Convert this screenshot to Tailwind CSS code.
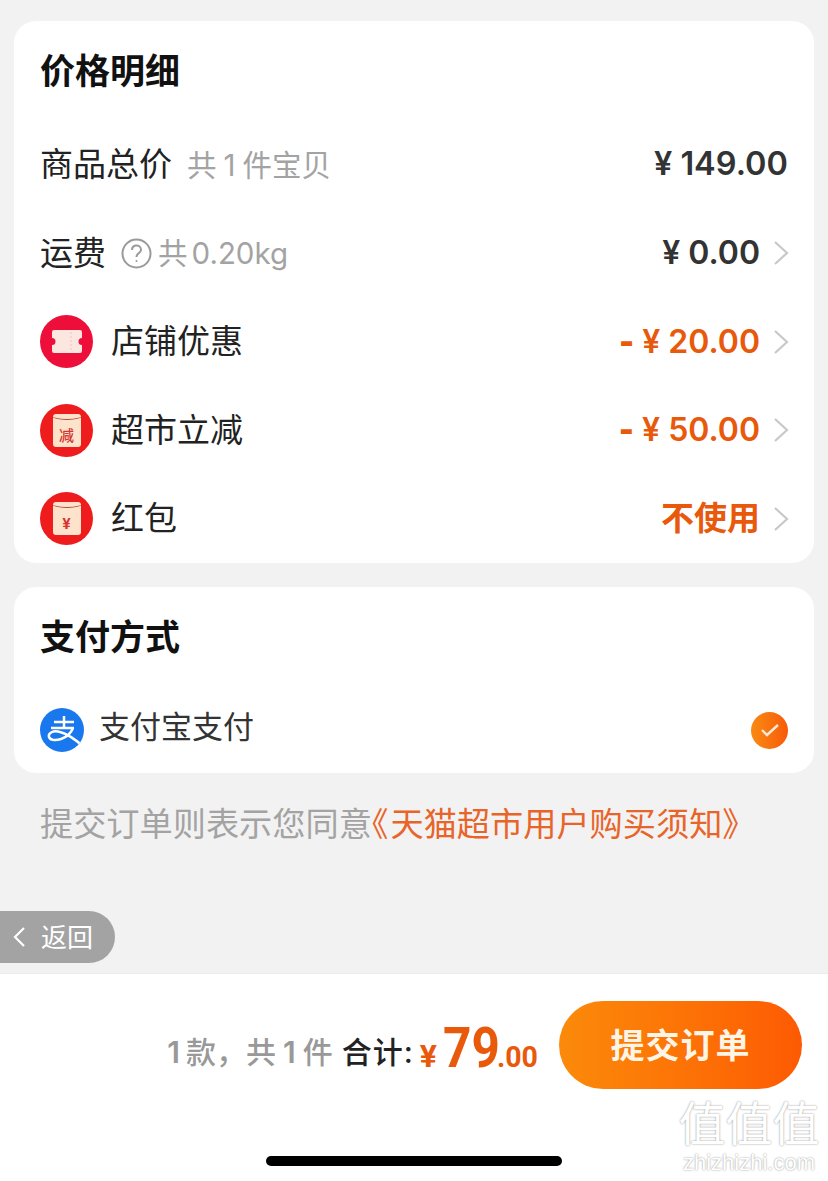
<!DOCTYPE html>
<html lang="zh-CN">
<head>
  <meta charset="UTF-8">
  <meta name="viewport" content="width=device-width, initial-scale=1.0">
  <title>确认订单</title>
  <script src="https://cdn.jsdelivr.net/npm/@tailwindcss/browser@4"></script>
</head>
<body class="font-['Inter','Noto_Sans_CJK_SC',sans-serif] bg-[#f2f2f2]">
  <div class="relative flex flex-col w-[828px] h-[1181px] overflow-hidden">

    <main class="flex-1 px-[14px] pt-[21px]">
      <!-- price detail -->
      <section class="bg-white rounded-[22px] pl-[26px] pr-[25px]">
        <h2 class="h-[99.5px] flex items-center text-[35px] font-bold text-[#111]">价格明细</h2>

        <div class="h-[88.5px] flex items-center justify-between">
          <div class="flex items-center">
            <span class="text-[33px] text-[#222]">商品总价</span>
            <span class="ml-[15px] text-[29.5px] text-[#a3a3a3]">共<span class="mx-[7px]">1</span>件宝贝</span>
          </div>
          <span class="mr-[1px] text-[32.5px] font-semibold text-[#333]">¥ 149.00</span>
        </div>

        <div class="h-[88.5px] flex items-center justify-between">
          <div class="flex items-center">
            <span class="text-[33px] text-[#222]">运费</span>
            <svg class="ml-[15px]" width="31" height="31" viewBox="0 0 31 31" fill="none" stroke="#9a9a9a" stroke-width="2"><circle cx="15.5" cy="15.5" r="14"/><path d="M11 12c0-3 2-4.500 4.500-4.500s4.500 1.700 4.500 4.200c0 3.300-4.500 3.300-4.500 7.300"/><circle cx="15.500" cy="23" r="1" fill="#9a9a9a" stroke="none"/></svg>
            <span class="ml-[6px] text-[29.5px] text-[#a3a3a3]">共<span class="ml-[4px]">0.20kg</span></span>
          </div>
          <div class="flex items-center">
            <span class="text-[32px] font-semibold text-[#333]">¥ 0.00</span>
            <svg class="ml-[13px]" width="16" height="26" viewBox="0 0 16 26" fill="none" stroke="#c8c8c8" stroke-width="2.200"><path d="M2 2l12 11L2 24"/></svg>
          </div>
        </div>

        <div class="h-[88.5px] flex items-center justify-between">
          <div class="flex items-center">
            <div class="w-[53px] h-[53px] rounded-full bg-[#ee0e3a] flex items-center justify-center">
              <svg width="30" height="23" viewBox="0 0 30 23"><path d="M2 0h26a2 2 0 0 1 2 2v6a3.500 3.500 0 0 0 0 7v6a2 2 0 0 1-2 2H2a2 2 0 0 1-2-2v-6a3.500 3.500 0 0 0 0-7V2a2 2 0 0 1 2-2z" fill="#fbe6e0"/><path d="M19 2v19" stroke="#f3c4bd" stroke-width="1" stroke-dasharray="2 2"/></svg>
            </div>
            <span class="ml-[18px] text-[33px] text-[#222]">店铺优惠</span>
          </div>
          <div class="flex items-center">
            <span class="text-[32px] font-semibold text-[#e8590c]"><b>-</b> ¥ 20.00</span>
            <svg class="ml-[13px]" width="16" height="26" viewBox="0 0 16 26" fill="none" stroke="#c8c8c8" stroke-width="2.200"><path d="M2 2l12 11L2 24"/></svg>
          </div>
        </div>

        <div class="h-[88.5px] flex items-center justify-between">
          <div class="flex items-center">
            <div class="w-[53px] h-[53px] rounded-full bg-[#ee1c1c] flex items-center justify-center">
              <div class="relative w-[28px] h-[33px] rounded-[3px] bg-[#fde3cc] flex items-end justify-center overflow-hidden">
                <div class="absolute -top-[4px] -left-[2px] w-[32px] h-[10px] rounded-b-[50%] border-b border-[#a8473a]"></div>
                <span class="text-[15px] leading-[23px] font-medium text-[#d4352f]">减</span>
              </div>
            </div>
            <span class="ml-[18px] text-[33px] text-[#222]">超市立减</span>
          </div>
          <div class="flex items-center">
            <span class="text-[32px] font-semibold text-[#e8590c]"><b>-</b> ¥ 50.00</span>
            <svg class="ml-[13px]" width="16" height="26" viewBox="0 0 16 26" fill="none" stroke="#c8c8c8" stroke-width="2.200"><path d="M2 2l12 11L2 24"/></svg>
          </div>
        </div>

        <div class="h-[88.5px] flex items-center justify-between">
          <div class="flex items-center">
            <div class="w-[53px] h-[53px] rounded-full bg-[#ee1c1c] flex items-center justify-center">
              <div class="relative w-[28px] h-[33px] rounded-[3px] bg-[#fde3cc] flex items-end justify-center overflow-hidden">
                <div class="absolute -top-[4px] -left-[2px] w-[32px] h-[10px] rounded-b-[50%] border-b border-[#a8473a]"></div>
                <span class="text-[15px] leading-[23px] font-bold text-[#d4352f]">¥</span>
              </div>
            </div>
            <span class="ml-[18px] text-[33px] text-[#222]">红包</span>
          </div>
          <div class="flex items-center">
            <span class="text-[33px] font-semibold text-[#e8590c]">不使用</span>
            <svg class="ml-[13px]" width="16" height="26" viewBox="0 0 16 26" fill="none" stroke="#c8c8c8" stroke-width="2.200"><path d="M2 2l12 11L2 24"/></svg>
          </div>
        </div>
      </section>

      <!-- payment -->
      <section class="mt-[24px] bg-white rounded-[22px] pl-[26px] pr-[26px]">
        <h2 class="h-[100px] flex items-center text-[35px] font-bold text-[#111]">支付方式</h2>
        <div class="h-[86px] flex items-center justify-between">
          <div class="flex items-center">
            <svg width="44" height="44" viewBox="0 0 44 44" fill="none" stroke="#fff" stroke-width="2.500">
              <defs><clipPath id="alipay-clip"><circle cx="22" cy="22" r="22"/></clipPath></defs>
              <circle cx="22" cy="22" r="22" fill="#1a78ee" stroke="none"/>
              <g clip-path="url(#alipay-clip)">
                <path d="M14 14h20M24 8v12M11 20h23"/>
                <path d="M33 20c-2 5-6 9-12 11-6 2-11 1-12-2-1-4 4-7 11-5 8 2 16 8 24 15"/>
              </g>
            </svg>
            <span class="ml-[15px] pb-[5px] text-[31px] text-[#333]">支付宝支付</span>
          </div>
          <div class="w-[37px] h-[37px] rounded-full bg-gradient-to-r from-[#f98a12] to-[#f7590b] flex items-center justify-center">
            <svg width="20" height="16" viewBox="0 0 20 16" fill="none" stroke="#fde9d8" stroke-width="2.400"><path d="M2 8l5 5L18 3"/></svg>
          </div>
        </div>
      </section>

      <p class="mt-[27px] pl-[26px] text-[33.2px] leading-[48px] text-[#a3a3a3] whitespace-nowrap">提交订单则表示您同意<span class="text-[#e8652a] [font-feature-settings:'halt']"><span class="mr-[2px]">《</span>天猫超市用户购买须知》</span></p>
    </main>

    <!-- floating back pill -->
    <div class="absolute left-0 top-[911px] w-[115px] h-[52px] rounded-r-[26px] bg-[#a3a3a3] flex items-center pl-[13px]">
      <svg width="13" height="22" viewBox="0 0 13 22" fill="none" stroke="#fff" stroke-width="2.200"><path d="M11 2L2 11l9 9"/></svg>
      <span class="ml-[15px] text-[26px] text-white">返回</span>
    </div>

    <!-- bottom bar -->
    <footer class="relative h-[208px] bg-white border-t border-[#ececec]">
      <div class="pr-[26px] pt-[27px] flex items-center justify-end whitespace-nowrap">
        <div class="mt-[15px] flex items-center">
          <span class="text-[30px] font-medium text-[#999]"><span class="mr-[6px] font-semibold">1</span>款，共<span class="mx-[7px] font-semibold">1</span>件</span>
          <span class="ml-[9px] text-[30px] font-medium text-[#222] tracking-[1px]">合计:</span>
          <div class="ml-[6px] mb-[8px] flex items-baseline font-['Roboto',sans-serif] font-bold text-[#e8590c]">
            <span class="text-[32px] leading-none">¥</span>
            <span class="ml-[6px] w-[54px] inline-block text-[55px] leading-none scale-x-[.9] origin-left">79</span>
            <span class="w-[40px] inline-block text-[30px] leading-none scale-x-[.95] origin-left">.00</span>
          </div>
        </div>
        <button class="ml-[22px] w-[243px] h-[88px] rounded-full bg-gradient-to-r from-[#fb8a0a] to-[#fd5a03] text-[34px] font-semibold tracking-[1px] text-[#fff5e6]">提交订单</button>
      </div>
      <div class="absolute left-[266px] top-[182px] w-[296px] h-[10px] rounded-full bg-black"></div>
      <!-- watermark -->
      <div class="absolute right-[8px] top-[122px] w-[142px] flex flex-col items-center text-white [text-shadow:0_0_2px_#888]">
        <span class="text-[47px] leading-[56px] whitespace-nowrap">值值值</span>
        <span class="text-[22px] leading-[22px] font-['Liberation_Sans',sans-serif]">zhizhizhi.com</span>
      </div>
    </footer>
  </div>
</body>
</html>
